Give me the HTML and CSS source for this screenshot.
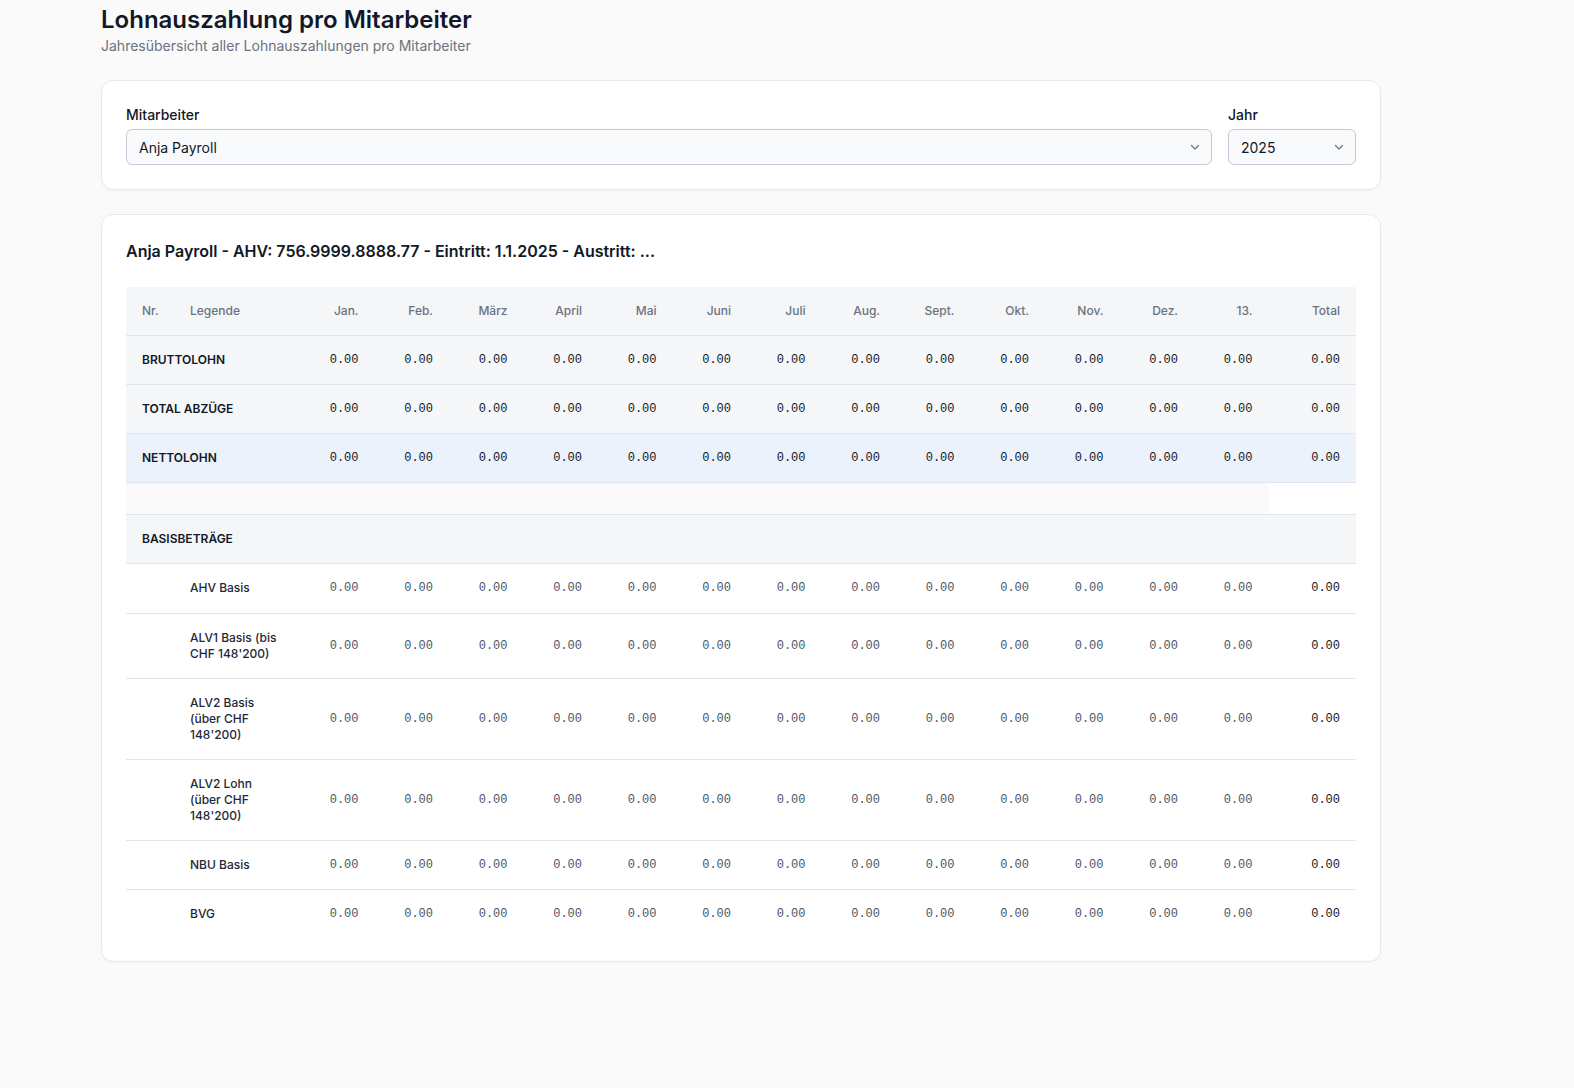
FILE: index.html
```html
<!DOCTYPE html>
<html lang="de">
<head>
<meta charset="utf-8">
<title>Lohnauszahlung pro Mitarbeiter</title>
<link rel="stylesheet" href="styles.css">
</head>
<body>
<main class="page">
  <header class="page-head">
    <h1 class="page-title">Lohnauszahlung pro Mitarbeiter</h1>
    <p class="page-sub">Jahresübersicht aller Lohnauszahlungen pro Mitarbeiter</p>
  </header>

  <section class="card filters">
    <div class="field field-grow">
      <label class="field-label">Mitarbeiter</label>
      <div class="select">
        <span>Anja Payroll</span>
        <svg class="chev" width="12" height="12" viewBox="0 0 12 12"><path d="M2.5 4.5 6 8l3.5-3.5" fill="none" stroke="#6b7280" stroke-width="1.2" stroke-linecap="round" stroke-linejoin="round"/></svg>
      </div>
    </div>
    <div class="field field-year">
      <label class="field-label">Jahr</label>
      <div class="select">
        <span>2025</span>
        <svg class="chev" width="12" height="12" viewBox="0 0 12 12"><path d="M2.5 4.5 6 8l3.5-3.5" fill="none" stroke="#6b7280" stroke-width="1.2" stroke-linecap="round" stroke-linejoin="round"/></svg>
      </div>
    </div>
  </section>

  <section class="card report">
    <h2 class="report-title">Anja Payroll - AHV: 756.9999.8888.77 - Eintritt: 1.1.2025 - Austritt: ...</h2>
    <table class="tbl">
      <colgroup>
        <col class="c-nr"><col class="c-leg">
        <col class="c-m"><col class="c-m"><col class="c-m"><col class="c-m"><col class="c-m"><col class="c-m"><col class="c-m"><col class="c-m"><col class="c-m"><col class="c-m"><col class="c-m"><col class="c-m"><col class="c-m">
        <col class="c-tot">
      </colgroup>
      <thead>
        <tr>
          <th class="l">Nr.</th><th class="l">Legende</th>
          <th>Jan.</th><th>Feb.</th><th>März</th><th>April</th><th>Mai</th><th>Juni</th><th>Juli</th><th>Aug.</th><th>Sept.</th><th>Okt.</th><th>Nov.</th><th>Dez.</th><th>13.</th><th>Total</th>
        </tr>
      </thead>
      <tbody>
        <tr class="sum">
          <td class="lbl" colspan="2">BRUTTOLOHN</td>
          <td>0.00</td><td>0.00</td><td>0.00</td><td>0.00</td><td>0.00</td><td>0.00</td><td>0.00</td><td>0.00</td><td>0.00</td><td>0.00</td><td>0.00</td><td>0.00</td><td>0.00</td><td>0.00</td>
        </tr>
        <tr class="sum">
          <td class="lbl" colspan="2">TOTAL ABZÜGE</td>
          <td>0.00</td><td>0.00</td><td>0.00</td><td>0.00</td><td>0.00</td><td>0.00</td><td>0.00</td><td>0.00</td><td>0.00</td><td>0.00</td><td>0.00</td><td>0.00</td><td>0.00</td><td>0.00</td>
        </tr>
        <tr class="sum net">
          <td class="lbl" colspan="2">NETTOLOHN</td>
          <td>0.00</td><td>0.00</td><td>0.00</td><td>0.00</td><td>0.00</td><td>0.00</td><td>0.00</td><td>0.00</td><td>0.00</td><td>0.00</td><td>0.00</td><td>0.00</td><td>0.00</td><td>0.00</td>
        </tr>
        <tr class="spacer">
          <td colspan="15"></td><td class="blank"></td>
        </tr>
        <tr class="group">
          <td class="lbl" colspan="16">BASISBETRÄGE</td>
        </tr>
        <tr class="det">
          <td></td><td class="leg">AHV Basis</td>
          <td>0.00</td><td>0.00</td><td>0.00</td><td>0.00</td><td>0.00</td><td>0.00</td><td>0.00</td><td>0.00</td><td>0.00</td><td>0.00</td><td>0.00</td><td>0.00</td><td>0.00</td><td class="tot">0.00</td>
        </tr>
        <tr class="det">
          <td></td><td class="leg">ALV1 Basis (bis CHF 148'200)</td>
          <td>0.00</td><td>0.00</td><td>0.00</td><td>0.00</td><td>0.00</td><td>0.00</td><td>0.00</td><td>0.00</td><td>0.00</td><td>0.00</td><td>0.00</td><td>0.00</td><td>0.00</td><td class="tot">0.00</td>
        </tr>
        <tr class="det">
          <td></td><td class="leg">ALV2 Basis (über CHF 148'200)</td>
          <td>0.00</td><td>0.00</td><td>0.00</td><td>0.00</td><td>0.00</td><td>0.00</td><td>0.00</td><td>0.00</td><td>0.00</td><td>0.00</td><td>0.00</td><td>0.00</td><td>0.00</td><td class="tot">0.00</td>
        </tr>
        <tr class="det">
          <td></td><td class="leg">ALV2 Lohn (über CHF 148'200)</td>
          <td>0.00</td><td>0.00</td><td>0.00</td><td>0.00</td><td>0.00</td><td>0.00</td><td>0.00</td><td>0.00</td><td>0.00</td><td>0.00</td><td>0.00</td><td>0.00</td><td>0.00</td><td class="tot">0.00</td>
        </tr>
        <tr class="det">
          <td></td><td class="leg">NBU Basis</td>
          <td>0.00</td><td>0.00</td><td>0.00</td><td>0.00</td><td>0.00</td><td>0.00</td><td>0.00</td><td>0.00</td><td>0.00</td><td>0.00</td><td>0.00</td><td>0.00</td><td>0.00</td><td class="tot">0.00</td>
        </tr>
        <tr class="det last">
          <td></td><td class="leg">BVG</td>
          <td>0.00</td><td>0.00</td><td>0.00</td><td>0.00</td><td>0.00</td><td>0.00</td><td>0.00</td><td>0.00</td><td>0.00</td><td>0.00</td><td>0.00</td><td>0.00</td><td>0.00</td><td class="tot">0.00</td>
        </tr>
      </tbody>
    </table>
  </section>
</main>
</body>
</html>
```

FILE: styles.css
```css
* { box-sizing: border-box; }
html, body { margin: 0; padding: 0; }
body {
  background: #fafafa;
  font-family: Inter, "Noto Sans", "Liberation Sans", sans-serif;
  color: #111827;
  min-height: 1088px;
}
.page {
  width: 1280px;
  margin-left: 101px;
  padding-top: 4px;
}
.page-title {
  margin: 0;
  font-size: 24px;
  line-height: 32px;
  font-weight: 600;
  color: #111827;
}
.page-sub {
  margin: 0;
  font-size: 14px;
  line-height: 20px;
  color: #6b7280;
}
.card {
  background: #fff;
  border: 1px solid #e8e9ec;
  border-radius: 12px;
  box-shadow: 0 1px 2px rgba(0,0,0,0.03);
}
.filters {
  margin-top: 24px;
  padding: 24px;
  display: flex;
  gap: 16px;
}
.field { display: flex; flex-direction: column; }
.field-grow { flex: 1; }
.field-year { width: 128px; }
.field-label {
  font-size: 14px;
  line-height: 20px;
  font-weight: 500;
  color: #111827;
  margin-bottom: 4px;
}
.select {
  height: 36px;
  border: 1px solid #c3cbd9;
  border-radius: 6px;
  background: #f9fafb;
  display: flex;
  align-items: center;
  justify-content: space-between;
  padding: 0 10px 0 12px;
  font-size: 14px;
  color: #111827;
}
.chev { display: block; }
.report {
  margin-top: 24px;
  padding: 24px 24px 22px;
}
.report-title {
  margin: 0 0 24px;
  font-size: 16px;
  line-height: 24px;
  font-weight: 600;
  color: #111827;
}
.tbl {
  width: 1230px;
  border-collapse: collapse;
  table-layout: fixed;
  font-size: 12px;
  line-height: 16.1px;
}
.c-nr { width: 48px; }
.c-leg { width: 126px; }
.c-m { width: 74.5px; }
.c-tot { width: 87.5px; }
.tbl th, .tbl td {
  padding: 16px;
  text-align: right;
  vertical-align: middle;
  border-bottom: 1px solid #e1e5ec;
}
.tbl th {
  background: #f5f6f8;
  font-weight: 500;
  color: #6b7280;
}
.tbl th.l { text-align: left; }
.tbl td {
  font-family: "Liberation Mono", "DejaVu Sans Mono", monospace;
  color: #4b5563;
}
.tbl td.lbl, .tbl td.leg {
  font-family: Inter, "Noto Sans", "Liberation Sans", sans-serif;
  text-align: left;
}
.tbl td.lbl { font-weight: 600; color: #111827; }
.tbl td.leg { font-weight: 500; color: #1f2937; }
.sum td { background: #f6f7f9; color: #111827; }
.net td { background: #ebf2fc; }
.spacer td { padding: 0; height: 32px; background: #fafafa; }
.spacer td.blank { background: #fff; }
.group td { background: #f5f6f8; }
.det td.tot { color: #111827; }
.last td { border-bottom: none; }
```
